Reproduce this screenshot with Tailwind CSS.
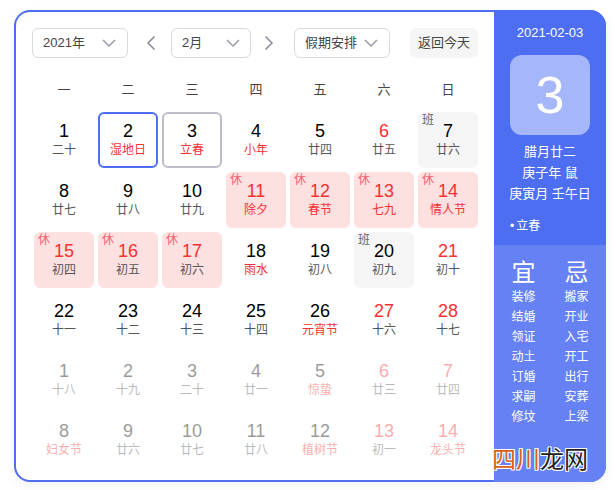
<!DOCTYPE html>
<html lang="zh"><head><meta charset="utf-8">
<script src="https://cdn.jsdelivr.net/npm/@tailwindcss/browser@4"></script>
</head>
<body class="bg-white w-[616px] h-[490px] overflow-hidden relative font-['Liberation_Sans','Noto_Sans_CJK_SC',sans-serif]">
<div class="ml-[14px] mt-[10px] w-[592px] h-[472px] flex rounded-2xl border-2 border-[#4e6ef2] bg-white shadow-[0_4px_12px_rgba(0,0,0,0.06)]">
  <main class="w-[478px] h-full pl-4 pt-4 shrink-0">
    <div class="flex items-center h-[30px] text-[13px] text-[#444]">
      <div class="w-24 h-[30px] rounded-md border border-[#d8d8de] flex items-center justify-between pl-[10px] pr-[10px]"><span>2021年</span><svg width="16" height="10" viewBox="0 0 16 10" fill="none" stroke="#9a9ca8" stroke-width="1.5"><path d="M2 2l6 6 6-6"/></svg></div>
      <svg class="ml-[17px]" width="12" height="16" viewBox="0 0 12 16" fill="none" stroke="#8a8c98" stroke-width="1.5"><path d="M9.5 1.5L3 8l6.5 6.5"/></svg>
      <div class="ml-[14px] w-20 h-[30px] rounded-md border border-[#d8d8de] flex items-center justify-between pl-[10px] pr-[9px]"><span>2月</span><svg width="16" height="10" viewBox="0 0 16 10" fill="none" stroke="#9a9ca8" stroke-width="1.5"><path d="M2 2l6 6 6-6"/></svg></div>
      <svg class="ml-3" width="12" height="16" viewBox="0 0 12 16" fill="none" stroke="#8a8c98" stroke-width="1.5"><path d="M2.5 1.5L9 8l-6.5 6.5"/></svg>
      <div class="ml-[19px] w-24 h-[30px] rounded-md border border-[#d8d8de] flex items-center justify-between pl-[10px] pr-[10px]"><span>假期安排</span><svg class="shrink-0" width="16" height="10" viewBox="0 0 16 10" fill="none" stroke="#9a9ca8" stroke-width="1.5"><path d="M2 2l6 6 6-6"/></svg></div>
      <div class="ml-5 w-[68px] h-[30px] rounded-md bg-[#f5f5f6] flex items-center justify-center">返回今天</div>
    </div>
    <div class="ml-[2px] mt-5 w-[444px] grid grid-cols-7 gap-x-1 text-[13px] text-[#444] text-center h-6 leading-6">
      <div>一</div><div>二</div><div>三</div><div>四</div><div>五</div><div>六</div><div>日</div>
    </div>
    <div class="ml-[2px] mt-[10px] w-[444px] grid grid-cols-7 gap-1 auto-rows-[56px] text-center">
      <div class="pt-[8px]"><p class="text-lg leading-[22px] text-black">1</p><p class="text-xs leading-4 text-[#555]">二十</p></div>
      <div class="pt-[6px] rounded-md border-2 border-[#4e6ef2]"><p class="text-lg leading-[22px] text-black">2</p><p class="text-xs leading-4 text-[#f73131]">湿地日</p></div>
      <div class="pt-[6px] rounded-md border-2 border-[#bbbec8]"><p class="text-lg leading-[22px] text-black">3</p><p class="text-xs leading-4 text-[#f73131]">立春</p></div>
      <div class="pt-[8px]"><p class="text-lg leading-[22px] text-black">4</p><p class="text-xs leading-4 text-[#f73131]">小年</p></div>
      <div class="pt-[8px]"><p class="text-lg leading-[22px] text-black">5</p><p class="text-xs leading-4 text-[#555]">廿四</p></div>
      <div class="pt-[8px]"><p class="text-lg leading-[22px] text-[#f73131]">6</p><p class="text-xs leading-4 text-[#555]">廿五</p></div>
      <div class="pt-[8px] relative rounded-md bg-[#f5f5f6]"><span class="absolute left-1 top-0 text-xs leading-4 text-[#626675]">班</span><p class="text-lg leading-[22px] text-black">7</p><p class="text-xs leading-4 text-[#555]">廿六</p></div>

      <div class="pt-[8px]"><p class="text-lg leading-[22px] text-black">8</p><p class="text-xs leading-4 text-[#555]">廿七</p></div>
      <div class="pt-[8px]"><p class="text-lg leading-[22px] text-black">9</p><p class="text-xs leading-4 text-[#555]">廿八</p></div>
      <div class="pt-[8px]"><p class="text-lg leading-[22px] text-black">10</p><p class="text-xs leading-4 text-[#555]">廿九</p></div>
      <div class="pt-[8px] relative rounded-md bg-[#fde0e0]"><span class="absolute left-1 top-0 text-xs leading-4 text-[#f5606a]">休</span><p class="text-lg leading-[22px] text-[#f73131]">11</p><p class="text-xs leading-4 text-[#f73131]">除夕</p></div>
      <div class="pt-[8px] relative rounded-md bg-[#fde0e0]"><span class="absolute left-1 top-0 text-xs leading-4 text-[#f5606a]">休</span><p class="text-lg leading-[22px] text-[#f73131]">12</p><p class="text-xs leading-4 text-[#f73131]">春节</p></div>
      <div class="pt-[8px] relative rounded-md bg-[#fde0e0]"><span class="absolute left-1 top-0 text-xs leading-4 text-[#f5606a]">休</span><p class="text-lg leading-[22px] text-[#f73131]">13</p><p class="text-xs leading-4 text-[#f73131]">七九</p></div>
      <div class="pt-[8px] relative rounded-md bg-[#fde0e0]"><span class="absolute left-1 top-0 text-xs leading-4 text-[#f5606a]">休</span><p class="text-lg leading-[22px] text-[#f73131]">14</p><p class="text-xs leading-4 text-[#f73131]">情人节</p></div>

      <div class="pt-[8px] relative rounded-md bg-[#fde0e0]"><span class="absolute left-1 top-0 text-xs leading-4 text-[#f5606a]">休</span><p class="text-lg leading-[22px] text-[#f73131]">15</p><p class="text-xs leading-4 text-[#555]">初四</p></div>
      <div class="pt-[8px] relative rounded-md bg-[#fde0e0]"><span class="absolute left-1 top-0 text-xs leading-4 text-[#f5606a]">休</span><p class="text-lg leading-[22px] text-[#f73131]">16</p><p class="text-xs leading-4 text-[#555]">初五</p></div>
      <div class="pt-[8px] relative rounded-md bg-[#fde0e0]"><span class="absolute left-1 top-0 text-xs leading-4 text-[#f5606a]">休</span><p class="text-lg leading-[22px] text-[#f73131]">17</p><p class="text-xs leading-4 text-[#555]">初六</p></div>
      <div class="pt-[8px]"><p class="text-lg leading-[22px] text-black">18</p><p class="text-xs leading-4 text-[#f73131]">雨水</p></div>
      <div class="pt-[8px]"><p class="text-lg leading-[22px] text-black">19</p><p class="text-xs leading-4 text-[#555]">初八</p></div>
      <div class="pt-[8px] relative rounded-md bg-[#f5f5f6]"><span class="absolute left-1 top-0 text-xs leading-4 text-[#626675]">班</span><p class="text-lg leading-[22px] text-black">20</p><p class="text-xs leading-4 text-[#555]">初九</p></div>
      <div class="pt-[8px]"><p class="text-lg leading-[22px] text-[#f73131]">21</p><p class="text-xs leading-4 text-[#555]">初十</p></div>

      <div class="pt-[8px]"><p class="text-lg leading-[22px] text-black">22</p><p class="text-xs leading-4 text-[#555]">十一</p></div>
      <div class="pt-[8px]"><p class="text-lg leading-[22px] text-black">23</p><p class="text-xs leading-4 text-[#555]">十二</p></div>
      <div class="pt-[8px]"><p class="text-lg leading-[22px] text-black">24</p><p class="text-xs leading-4 text-[#555]">十三</p></div>
      <div class="pt-[8px]"><p class="text-lg leading-[22px] text-black">25</p><p class="text-xs leading-4 text-[#555]">十四</p></div>
      <div class="pt-[8px]"><p class="text-lg leading-[22px] text-black">26</p><p class="text-xs leading-4 text-[#f73131]">元宵节</p></div>
      <div class="pt-[8px]"><p class="text-lg leading-[22px] text-[#f73131]">27</p><p class="text-xs leading-4 text-[#555]">十六</p></div>
      <div class="pt-[8px]"><p class="text-lg leading-[22px] text-[#f73131]">28</p><p class="text-xs leading-4 text-[#555]">十七</p></div>

      <div class="pt-[8px] opacity-40"><p class="text-lg leading-[22px] text-black">1</p><p class="text-xs leading-4 text-[#555]">十八</p></div>
      <div class="pt-[8px] opacity-40"><p class="text-lg leading-[22px] text-black">2</p><p class="text-xs leading-4 text-[#555]">十九</p></div>
      <div class="pt-[8px] opacity-40"><p class="text-lg leading-[22px] text-black">3</p><p class="text-xs leading-4 text-[#555]">二十</p></div>
      <div class="pt-[8px] opacity-40"><p class="text-lg leading-[22px] text-black">4</p><p class="text-xs leading-4 text-[#555]">廿一</p></div>
      <div class="pt-[8px] opacity-40"><p class="text-lg leading-[22px] text-black">5</p><p class="text-xs leading-4 text-[#f73131]">惊蛰</p></div>
      <div class="pt-[8px] opacity-40"><p class="text-lg leading-[22px] text-[#f73131]">6</p><p class="text-xs leading-4 text-[#555]">廿三</p></div>
      <div class="pt-[8px] opacity-40"><p class="text-lg leading-[22px] text-[#f73131]">7</p><p class="text-xs leading-4 text-[#555]">廿四</p></div>

      <div class="pt-[8px] opacity-40"><p class="text-lg leading-[22px] text-black">8</p><p class="text-xs leading-4 text-[#f73131]">妇女节</p></div>
      <div class="pt-[8px] opacity-40"><p class="text-lg leading-[22px] text-black">9</p><p class="text-xs leading-4 text-[#555]">廿六</p></div>
      <div class="pt-[8px] opacity-40"><p class="text-lg leading-[22px] text-black">10</p><p class="text-xs leading-4 text-[#555]">廿七</p></div>
      <div class="pt-[8px] opacity-40"><p class="text-lg leading-[22px] text-black">11</p><p class="text-xs leading-4 text-[#555]">廿八</p></div>
      <div class="pt-[8px] opacity-40"><p class="text-lg leading-[22px] text-black">12</p><p class="text-xs leading-4 text-[#f73131]">植树节</p></div>
      <div class="pt-[8px] opacity-40"><p class="text-lg leading-[22px] text-[#f73131]">13</p><p class="text-xs leading-4 text-[#555]">初一</p></div>
      <div class="pt-[8px] opacity-40"><p class="text-lg leading-[22px] text-[#f73131]">14</p><p class="text-xs leading-4 text-[#f73131]">龙头节</p></div>
    </div>
  </main>
  <aside class="flex-1 flex flex-col text-white -mt-[2px] -mb-[2px] -mr-[2px] rounded-r-2xl overflow-hidden">
    <div class="h-[235px] bg-[#4e6ef2] flex flex-col items-center shrink-0">
      <p class="mt-[14px] text-[13px] leading-[18px]">2021-02-03</p>
      <div class="mt-[13px] w-20 h-20 rounded-xl bg-[#a6b6fa] flex items-center justify-center text-[52px] leading-none">3</div>
      <p class="mt-[6px] text-[13px] leading-[21px] text-center">腊月廿二<br>庚子年 鼠<br>庚寅月 壬午日</p>
      <p class="mt-3 self-start ml-4 text-xs leading-5"><span class="mr-[2px]">•</span>立春</p>
    </div>
    <div class="flex-1 bg-[#6581f3] grid grid-cols-2 px-[3px] pt-[14px] content-start text-center text-xs leading-5">
      <div><p class="text-2xl leading-7">宜</p><p>装修</p><p>结婚</p><p>领证</p><p>动土</p><p>订婚</p><p>求嗣</p><p>修坟</p></div>
      <div><p class="text-2xl leading-7">忌</p><p>搬家</p><p>开业</p><p>入宅</p><p>开工</p><p>出行</p><p>安葬</p><p>上梁</p></div>
    </div>
  </aside>
</div>
<div class="absolute left-[492px] top-[445px] text-[24px] leading-[30px] whitespace-nowrap [text-shadow:1px_1px_0_#fff,-1px_-1px_0_#fff,1px_-1px_0_#fff,-1px_1px_0_#fff]"><span class="text-[#d9601a]">四川</span><span class="text-[#222]">龙网</span></div>
</body></html>
